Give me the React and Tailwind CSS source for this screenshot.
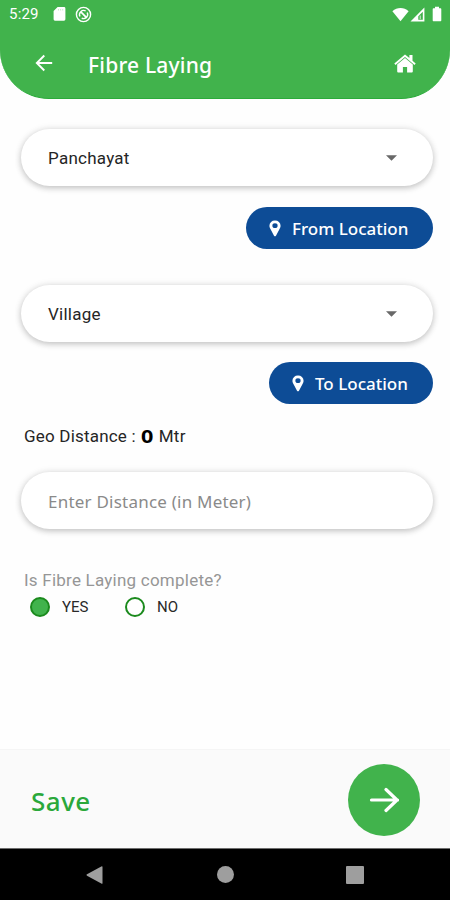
import React from "react";

const ubuntuLike = "font-['Noto_Sans',sans-serif]";

function StatusBar() {
  return (
    <div className="flex h-7 items-center text-white">
      <span className="ml-[9px] w-[44px] text-[15px] leading-none tracking-[0.2px]">5:29</span>
      <svg className="h-[16px] w-[13px]" viewBox="0 0 13 16" fill="currentColor">
        <path d="M4.600 1H11a1.400 1.400 0 0 1 1.400 1.400v10.900a1.400 1.400 0 0 1-1.400 1.400H2A1.400 1.400 0 0 1 .6 13.300V5z" />
        <path d="M5.500 3v1.500M7.600 3v1.500M9.700 3v1.500" stroke="#b5e2b9" strokeWidth="0.700" />
      </svg>
      <svg className="ml-[9px] h-[17px] w-[17px]" viewBox="0 0 17 17" fill="none" stroke="currentColor">
        <circle cx="8.500" cy="8.500" r="7.100" strokeWidth="1.400" />
        <path d="M4.900 10.500a4.200 4.200 0 0 1 5.800-5.500M12.200 6.500a4.200 4.200 0 0 1-5.500 5.700" strokeWidth="1.400" />
        <path d="M6.100 6.100l5.700 5.700" strokeWidth="1.700" />
      </svg>
      <svg className="ml-auto h-[15px] w-[17px]" viewBox="0 0 17 15" fill="currentColor">
        <path d="M.4 4.200C5-.1 12-.1 16.600 4.200L8.500 14.300z" />
      </svg>
      <svg className="ml-[1px] h-[15px] w-[15px]" viewBox="0 0 15 15">
        <path fill="currentColor" fillRule="evenodd" d="M.5 14.400L14.400.5v13.900zM8.300 12.800h4.500V4.700L8.300 9.200z" />
        <path d="M10.200 8.500v3.700" stroke="currentColor" strokeWidth="0.800" />
      </svg>
      <svg className="mr-[8px] ml-[7px] h-[16px] w-[10px]" viewBox="0 0 10 16" fill="currentColor">
        <path d="M3 .8h4v1.500h1.300c.6 0 1 .4 1 1v11c0 .6-.4 1-1 1H1.700c-.6 0-1-.4-1-1v-11c0-.6.400-1 1-1H3z" />
      </svg>
    </div>
  );
}

function Header() {
  return (
    <header className="h-[99px] shrink-0 rounded-b-[49px] border-b border-[#2bab3a] bg-[#41b34c]">
      <StatusBar />
      <div className="flex h-[70px] items-center text-white">
        <svg className="ml-[35px] h-[18px] w-[18px]" viewBox="0 0 18 18" fill="none" stroke="currentColor" strokeWidth="1.900">
          <path d="M17.200 9H2M9.300 1.500L1.800 9l7.500 7.500" />
        </svg>
        <h1 className={`${ubuntuLike} mt-[4px] ml-[35px] text-[21px] leading-none font-medium tracking-[0.200px]`}>Fibre Laying</h1>
        <svg className="mr-[34px] ml-auto h-[19px] w-[22px]" viewBox="0 0 22 19" fill="currentColor">
          <path d="M11 .6L.3 9.400l1.200 1.500L11 3.100l9.500 7.800 1.200-1.500-3.200-2.700V1.100h-3.100v3z" />
          <path d="M11 3.900l-7.800 6.600v7.100c0 .6.400.9.900.9h4.800v-5.600h4.200v5.600h4.800c.5 0 .9-.3.900-.9v-7.100z" />
        </svg>
      </div>
    </header>
  );
}

function Field({ children }) {
  return (
    <div className="flex h-[57px] items-center rounded-full bg-white pr-[36px] pl-[27px] shadow-[0_2px_6px_rgba(0,0,0,0.21),0_0_9px_rgba(0,0,0,0.07)]">
      {children}
    </div>
  );
}

function SelectField({ label, className }) {
  return (
    <Field>
      <span className={`text-[17px] leading-none text-[#252525] ${className}`}>{label}</span>
      <svg className="ml-auto h-[6px] w-[11px]" viewBox="0 0 11 6" fill="#686868">
        <path d="M0 .3h11L5.500 5.800z" />
      </svg>
    </Field>
  );
}

function LocationButton({ label, className }) {
  return (
    <button className={`flex h-[42px] items-center self-end rounded-full bg-[#0d4c96] pl-[23px] text-white ${className}`}>
      <svg className="h-[17px] w-[12px] shrink-0" viewBox="0 0 11 17" fill="currentColor" preserveAspectRatio="none">
        <path fillRule="evenodd" d="M5.500.6A5 5 0 0 0 .4 5.700c0 1.700.6 2.600 1.300 4l2.900 6c.4.8 1.400.8 1.800 0l2.900-6c.7-1.400 1.300-2.300 1.300-4A5 5 0 0 0 5.500.6zm0 2.700a2.400 2.400 0 1 1 0 4.800 2.400 2.400 0 0 1 0-4.800z" />
      </svg>
      <span className={`${ubuntuLike} mt-[1px] ml-[11px] text-[17px] leading-none font-medium whitespace-nowrap`}>{label}</span>
    </button>
  );
}

function Radio({ label, checked, className }) {
  return (
    <div className={`flex items-center ${className}`}>
      <span className={`h-5 w-5 rounded-full border-2 border-[#1b8a1d] ${checked ? "bg-[#41b34c]" : "bg-white"}`} />
      <span className="ml-[12px] text-[15px] leading-none text-[#292929]">{label}</span>
    </div>
  );
}

export default function App() {
  return (
    <div className="flex h-[900px] w-[450px] flex-col overflow-hidden bg-[#fefefe] font-[Roboto,sans-serif]">
      <Header />
      <main className="flex flex-1 flex-col pt-[30px] pr-[17px] pl-[21px]">
        <SelectField label="Panchayat" className="mt-[2px] tracking-[0.25px]" />
        <LocationButton label="From Location" className="mt-[21px] w-[187px]" />
        <div className="mt-[36px]">
          <SelectField label="Village" className="mt-[1px] tracking-[0.25px]" />
        </div>
        <LocationButton label="To Location" className="mt-[20px] w-[164px]" />
        <p className="mt-[22px] ml-[3px] flex h-[20px] items-center text-[17px] leading-[20px] tracking-[0.2px] text-[#252525]">
          <span>Geo Distance :</span>
          <b className="ml-[5px] w-[14px] origin-left scale-x-120 font-['Noto_Sans',sans-serif] text-[18px] leading-none font-bold tracking-normal text-black">0</b>
          <span className="ml-[4px]">Mtr</span>
        </p>
        <div className="mt-[26px]">
          <Field>
            <span className={`${ubuntuLike} mt-[1px] text-[17px] leading-none font-normal tracking-[0.22px] text-[#8a8a8a]`}>Enter Distance (in Meter)</span>
          </Field>
        </div>
        <p className="mt-[41px] ml-[3px] text-[17px] leading-[20px] tracking-[0.23px] text-[#969696]">Is Fibre Laying complete?</p>
        <div className="mt-[7px] ml-[9px] flex">
          <Radio label="YES" checked className="w-[95px]" />
          <Radio label="NO" />
        </div>
      </main>
      <footer className="flex h-[99px] shrink-0 items-center justify-between border-t border-[#f5f5f5] bg-[#fafafa] pr-[30px] pl-[31px]">
        <span className={`${ubuntuLike} mt-[4px] text-[26px] leading-none font-medium tracking-[0.5px] text-[#2aa83a]`}>Save</span>
        <button className="mt-[2px] flex h-[72px] w-[72px] items-center justify-center rounded-full bg-[#41b34c] text-white">
          <svg className="h-[26px] w-[30px]" viewBox="0 0 30 26" fill="none" stroke="currentColor" strokeWidth="3.200" strokeLinecap="round" strokeLinejoin="round">
            <path d="M2.500 13h26M17 2.500L28 13 17 23.500" />
          </svg>
        </button>
      </footer>
      <nav className="flex h-[52px] shrink-0 items-center border-t border-[#6d6d6d] bg-black">
        <svg className="ml-[86px] h-[18px] w-[17px]" viewBox="0 0 17 18" fill="#9e9e9e">
          <path d="M15.300.4q1.200-.6 1.200.7v15.800q0 1.300-1.200.7L1 9.700Q0 9 1 8.300z" />
        </svg>
        <span className="ml-[114px] h-[17px] w-[17px] rounded-full bg-[#9e9e9e]" />
        <span className="ml-[112px] h-[18px] w-[18px] rounded-[1px] bg-[#9e9e9e]" />
      </nav>
    </div>
  );
}
